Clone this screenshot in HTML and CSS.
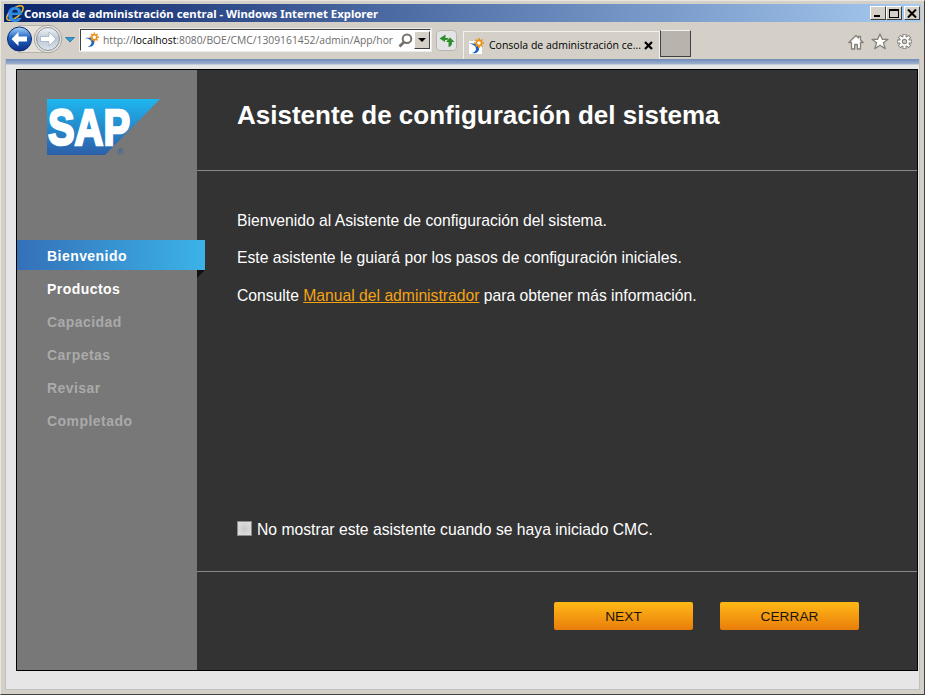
FILE: index.html
```html
<!DOCTYPE html>
<html lang="es">
  <head>
    <meta charset="UTF-8" />
    <title>Consola de administración central</title>
    <link rel="stylesheet" href="styles.css">
  </head>

  <body>
    <svg class="defs" width="0" height="0">
      <defs>
        <linearGradient id="glass" x1="0" y1="0" x2="0" y2="1">
          <stop offset="0" stop-color="#a8d6f7" />
          <stop offset="0.45" stop-color="#1f62c4" />
          <stop offset="1" stop-color="#0c2f86" />
        </linearGradient>
        <linearGradient id="glassOff" x1="0" y1="0" x2="0" y2="1">
          <stop offset="0" stop-color="#eef2f6" />
          <stop offset="0.5" stop-color="#bcc9d6" />
          <stop offset="1" stop-color="#dbe3ea" />
        </linearGradient>
        <linearGradient id="sapBlue" x1="0" y1="0" x2="0" y2="1">
          <stop offset="0" stop-color="#1eb7f0" />
          <stop offset="1" stop-color="#2d5ea9" />
        </linearGradient>
        <symbol id="favicon" viewBox="0 0 16 16">
          <rect x="1" y="3" width="13" height="13" fill="#fff" />
          <path d="M1 6c4 0 7 2 7 5 0 2-2 3.500-4 4 4 1 7-1 7-4.500C11 7 6 4.500 1 6z" fill="#1c63c0" />
          <g fill="none" stroke="#e8921c" stroke-width="1.600">
            <circle cx="11" cy="5" r="2.600" />
            <path d="M11 0v2M11 8v2M6 5h2M14 5h2M7.500 1.500l1.500 1.500M14.500 1.500l-1.500 1.500M7.500 8.500l1.500-1.500M14.500 8.500l-1.500-1.500" />
          </g>
        </symbol>
      </defs>
    </svg>

    <div class="window">
      <div class="titlebar">
        <svg class="ie_logo" width="20" height="36" viewBox="0 0 20 36">
          <ellipse cx="10" cy="18" rx="10" ry="4.500" transform="rotate(-40 10 18)" fill="none" stroke="#e8b52c" stroke-width="1.500" />
          <text x="2" y="26.500" class="ie_e">e</text>
        </svg>
        <span class="title_text">Consola de administración central - Windows Internet Explorer</span>
        <div class="controls">
          <div class="ctl"><span class="ctl_min"></span></div>
          <div class="ctl"><span class="ctl_max"></span></div>
          <div class="ctl ctl_close">
            <svg width="10" height="9" viewBox="0 0 10 9"><path d="M1 0.500l8 8M9 0.500l-8 8" stroke="#000" stroke-width="2" /></svg>
          </div>
        </div>
      </div>

      <div class="toolbar">
        <svg class="nav_btns" width="72" height="30" viewBox="0 0 72 30">
          <path d="M13 1.500h29v27H13z" fill="#e4e1db" stroke="#b8b4ac" />
          <circle cx="42" cy="15" r="13.800" fill="#e8e6e1" stroke="#a8a49c" />
          <circle cx="13.500" cy="15" r="12" fill="url(#glass)" stroke="#0d2a70" />
          <path d="M5.500 15l7-7v4.500h8.500v5h-8.500V22z" fill="#fff" />
          <circle cx="42" cy="15" r="11.500" fill="url(#glassOff)" stroke="#8a939c" />
          <path d="M50 15l-7-7v4.500h-8.500v5H43V22z" fill="#fff" stroke="#9fb0c2" stroke-width="0.800" />
          <path d="M59.500 13.500h9l-4.500 4.500z" fill="#2f9fd6" stroke="#10508a" stroke-width="0.600" />
        </svg>

        <div class="address">
          <svg class="fav" width="16" height="16"><use href="#favicon" /></svg>
          <span class="url">http://<b>localhost</b>:8080/BOE/CMC/1309161452/admin/App/hor</span>
          <svg class="search" width="15" height="15" viewBox="0 0 15 15">
            <circle cx="9" cy="5.800" r="4.300" fill="#fff" stroke="#77726a" stroke-width="2" />
            <path d="M6 9l-4.500 4.500" stroke="#77726a" stroke-width="2.800" />
          </svg>
          <div class="drop"><span class="drop_arrow"></span></div>
        </div>

        <div class="refresh">
          <svg width="16" height="14" viewBox="0 0 16 14">
            <path d="M6.500 0.500L0.500 4.500l5.500 3.500V6h1.500c1 0 1.500-.5 2-2H6.500z" fill="#2f8f2f" />
            <path d="M11 3.500L7 8h2.500v5c2.500-.5 3.500-2 3.500-4V8h2.500z" fill="#2f8f2f" />
          </svg>
        </div>

        <div class="tab">
          <svg class="fav" width="16" height="16"><use href="#favicon" /></svg>
          <span class="tab_title">Consola de administración ce...</span>
          <svg class="tab_close" width="9" height="9" viewBox="0 0 9 9"><path d="M1 1l7 7M8 1l-7 7" stroke="#000" stroke-width="2.200" /></svg>
        </div>
        <div class="new_tab"></div>

        <div class="tools">
          <svg width="16" height="16" viewBox="0 0 16 16">
            <path d="M8 1.500L0.800 8.500h2.700V15h3.200v-4.500h2.600V15h3.200V8.500h2.700L12.500 6V2.500h-2v1.500z" fill="#fff" stroke="#85817a" stroke-width="1.300" stroke-linejoin="round" />
          </svg>
          <svg width="18" height="17" viewBox="0 0 18 17">
            <path d="M9 1l2.300 5.300H17l-4.600 3.500 1.800 5.800L9 12.200l-5.200 3.400 1.800-5.800L1 6.300h5.700z" fill="#fff" stroke="#85817a" stroke-width="1.300" stroke-linejoin="round" />
          </svg>
          <svg width="17" height="17" viewBox="0 0 16 16">
            <path d="M8 1v3M8 12v3M1 8h3M12 8h3M3 3l2.100 2.100M10.900 10.900L13 13M13 3l-2.100 2.100M5.100 10.900L3 13" stroke="#85817a" stroke-width="3.800" />
            <circle cx="8" cy="8" r="5" fill="#85817a" />
            <path d="M8 1.700v3M8 11.300v3M1.700 8h3M11.300 8h3M3.500 3.500l2 2M10.500 10.500l2 2M12.500 3.500l-2 2M5.500 10.500l-2 2" stroke="#fff" stroke-width="2" />
            <circle cx="8" cy="8" r="4.200" fill="#fff" />
            <circle cx="8" cy="8" r="2" fill="#d4d0c8" stroke="#85817a" stroke-width="1" />
          </svg>
        </div>
      </div>

      <div class="page">
        <div class="blue_strip"></div>
        <div class="frame">
          <div class="sidebar">
            <svg class="sap_logo" width="114" height="57" viewBox="0 0 114 57">
              <polygon points="0,0 113,0 58,56 0,56" fill="url(#sapBlue)" />
              <text x="1" y="46" class="sap_text" textLength="82" lengthAdjust="spacingAndGlyphs">SAP</text>
              <text x="70" y="56" class="sap_reg">®</text>
            </svg>
            <ul class="steps">
              <li class="step active">Bienvenido</li>
              <li class="step current">Productos</li>
              <li class="step">Capacidad</li>
              <li class="step">Carpetas</li>
              <li class="step">Revisar</li>
              <li class="step">Completado</li>
            </ul>
          </div>

          <div class="main">
            <div class="head">
              <h1>Asistente de configuración del sistema</h1>
            </div>
            <div class="content">
              <p>Bienvenido al Asistente de configuración del sistema.</p>
              <p>Este asistente le guiará por los pasos de configuración iniciales.</p>
              <p>Consulte <a href="#">Manual del administrador</a> para obtener más información.</p>
              <label class="check_row">
                <span class="check"></span>
                No mostrar este asistente cuando se haya iniciado CMC.
              </label>
            </div>
            <div class="actions">
              <div class="btn">NEXT</div>
              <div class="btn">CERRAR</div>
            </div>
          </div>
        </div>
      </div>
    </div>
  </body>
</html>
```

FILE: styles.css
```css
* {
  box-sizing: border-box;
}

html,
body {
  margin: 0;
  height: 100%;
  background: #fff;
  overflow: hidden;
}

.defs {
  display: block;
  height: 0;
}

.window {
  width: 925px;
  height: 695px;
  padding: 3px;
  display: flex;
  flex-flow: column;
  background: #d4d0c8;
  border: 1px solid;
  border-color: #e8e6e0 #404040 #404040 #e8e6e0;
  font-family: "Liberation Sans", sans-serif;
}

/* title bar */
.titlebar {
  height: 18px;
  flex: none;
  display: flex;
  align-items: center;
  padding-right: 1px;
  background: linear-gradient(to right, #0a246a, #a6caf0);
}

.ie_logo {
  margin: -9px 0 -9px 1px;
  flex: none;
  overflow: visible;
}

.ie_e {
  font-family: "Liberation Sans", sans-serif;
  font-weight: bold;
  font-size: 28px;
  fill: #2f8be0;
}

.title_text {
  margin-left: -1px;
  color: #fff;
  font-family: "Noto Sans", sans-serif;
  font-weight: bold;
  font-size: 11.350px;
  white-space: nowrap;
}

.controls {
  margin-left: auto;
  display: flex;
}

.ctl {
  width: 16px;
  height: 14px;
  position: relative;
  display: flex;
  align-items: center;
  justify-content: center;
  background: #d4d0c8;
  border: 1px solid;
  border-color: #fff #404040 #404040 #fff;
}

.ctl_close {
  margin-left: 2px;
}

.ctl_min {
  width: 6px;
  height: 2px;
  margin-top: 6px;
  margin-right: 2px;
  background: #000;
}

.ctl_max {
  width: 10px;
  height: 9px;
  border: 1px solid #000;
  border-top-width: 2px;
}

/* toolbar */
.toolbar {
  height: 37px;
  flex: none;
  display: flex;
  align-items: flex-start;
}

.nav_btns {
  margin: 2px 0 0 2px;
  flex: none;
}

.address {
  width: 351px;
  height: 22px;
  margin: 7px 0 0 2px;
  flex: none;
  display: flex;
  align-items: center;
  padding-left: 3px;
  background: #fff;
  border: 1px solid;
  border-color: #404040 #fff #fff #404040;
  box-shadow: 0 0 0 1px #eeece8;
}

.url {
  width: 292px;
  margin-left: 4px;
  flex: none;
  white-space: nowrap;
  color: #6d6d6d;
  font-family: "Open Sans", sans-serif;
  font-size: 10.300px;
}

.url b {
  font-weight: normal;
  color: #000;
}

.search {
  margin-left: 3px;
  flex: none;
}

.drop {
  width: 16px;
  height: 18px;
  margin-left: 1px;
  flex: none;
  display: flex;
  align-items: center;
  justify-content: center;
  background: #d4d0c8;
  border: 1px solid;
  border-color: #fff #404040 #404040 #fff;
}

.drop_arrow {
  width: 0;
  height: 0;
  border: 4px solid transparent;
  border-top-color: #000;
  border-bottom-width: 0;
}

.refresh {
  width: 21px;
  height: 21px;
  margin: 8px 0 0 5px;
  flex: none;
  display: flex;
  align-items: center;
  justify-content: center;
  background: #e4e4e6;
  border: 1px solid #b8b6b0;
  border-radius: 4px;
}

.tab {
  width: 197px;
  height: 28px;
  margin: 9px 0 0 6px;
  flex: none;
  display: flex;
  align-items: center;
  padding-left: 4px;
  background: #d4d0c8;
  border: 1px solid #f4f2ee;
  border-bottom: 0;
}

.tab_title {
  margin: -2px 0 0 5px;
  width: 153px;
  white-space: nowrap;
  font-family: "Open Sans", sans-serif;
  font-size: 10.500px;
  color: #000;
}

.tab_close {
  margin-left: 2px;
}

.new_tab {
  width: 31px;
  height: 27px;
  margin-top: 8px;
  flex: none;
  background: #b8b4ad;
  border: 1px solid;
  border-color: #f4f2ee #404040 #404040 #404040;
}

.tools {
  margin: 11px 8px 0 auto;
  display: flex;
  align-items: center;
  gap: 7px;
}

/* page area */
.page {
  flex: 1;
  min-height: 0;
  margin: 0 1px 1px 1px;
  display: flex;
  flex-flow: column;
  background: #e6e6e6;
  border: 1px solid #c0c0c0;
  border-top: 0;
}

.blue_strip {
  height: 6px;
  flex: none;
  background: linear-gradient(to bottom, #6f8ab8, #9db1cf);
  border-bottom: 1px solid #c4ccd8;
}

.frame {
  width: 902px;
  height: 602px;
  margin: 4px 0 0 10px;
  flex: none;
  display: flex;
  background: #333;
  border: 1px solid #000;
}

.sidebar {
  width: 180px;
  flex: none;
  padding-top: 29px;
  background: #787878;
}

.sap_logo {
  display: block;
  margin-left: 30px;
  height: 57px;
}

.sap_text {
  font-family: "Liberation Sans", sans-serif;
  font-weight: bold;
  font-size: 50px;
  fill: #fff;
  stroke: #fff;
  stroke-width: 2.500px;
}

.sap_reg {
  font-family: "Liberation Sans", sans-serif;
  font-size: 9px;
  fill: #2d5ea9;
}

.steps {
  margin: 84px 0 0 0;
  padding: 0;
  list-style: none;
}

.step {
  height: 30px;
  margin-bottom: 3px;
  padding-left: 30px;
  line-height: 32px;
  color: #aaa;
  font-size: 14px;
  font-weight: bold;
  letter-spacing: 0.450px;
}

.step.current {
  color: #fff;
}

.step.active {
  position: relative;
  margin-right: -8px;
  color: #fff;
  background: linear-gradient(to right, #3470b8, #3bb3e8);
}

.step.active::after {
  content: "";
  position: absolute;
  right: 0;
  top: 30px;
  border-top: 8px solid #111;
  border-right: 8px solid transparent;
}

.main {
  flex: 1;
  min-width: 0;
  display: flex;
  flex-flow: column;
  color: #fff;
}

.head {
  height: 101px;
  flex: none;
  display: flex;
  align-items: center;
  padding: 0 40px 10px;
  border-bottom: 1px solid #888;
}

h1 {
  margin: 0;
  font-size: 26px;
  font-weight: bold;
}

.content {
  flex: 1;
  display: flex;
  flex-flow: column;
  padding: 41px 40px 31px;
  border-bottom: 1px solid #888;
  font-size: 15.700px;
}

.content p {
  margin: 0 0 19.250px;
  line-height: 18px;
}

.content a {
  color: #f5a313;
}

.check_row {
  margin-top: auto;
  display: flex;
  align-items: center;
  gap: 5px;
  line-height: 20px;
}

.check {
  width: 15px;
  height: 15px;
  margin-top: -4px;
  background: radial-gradient(#c8c8c8, #e2e2e2);
  border: 1px solid #8a8a8a;
}

.actions {
  height: 98px;
  flex: none;
  display: flex;
  justify-content: flex-end;
  align-items: flex-start;
  gap: 27px;
  padding: 30px 58px 0 0;
}

.btn {
  width: 139px;
  height: 28px;
  text-align: center;
  line-height: 29px;
  font-size: 13.700px;
  color: #1c1408;
  background: linear-gradient(to bottom, #ffb915, #e97d0c);
  border-radius: 2px;
}
```
